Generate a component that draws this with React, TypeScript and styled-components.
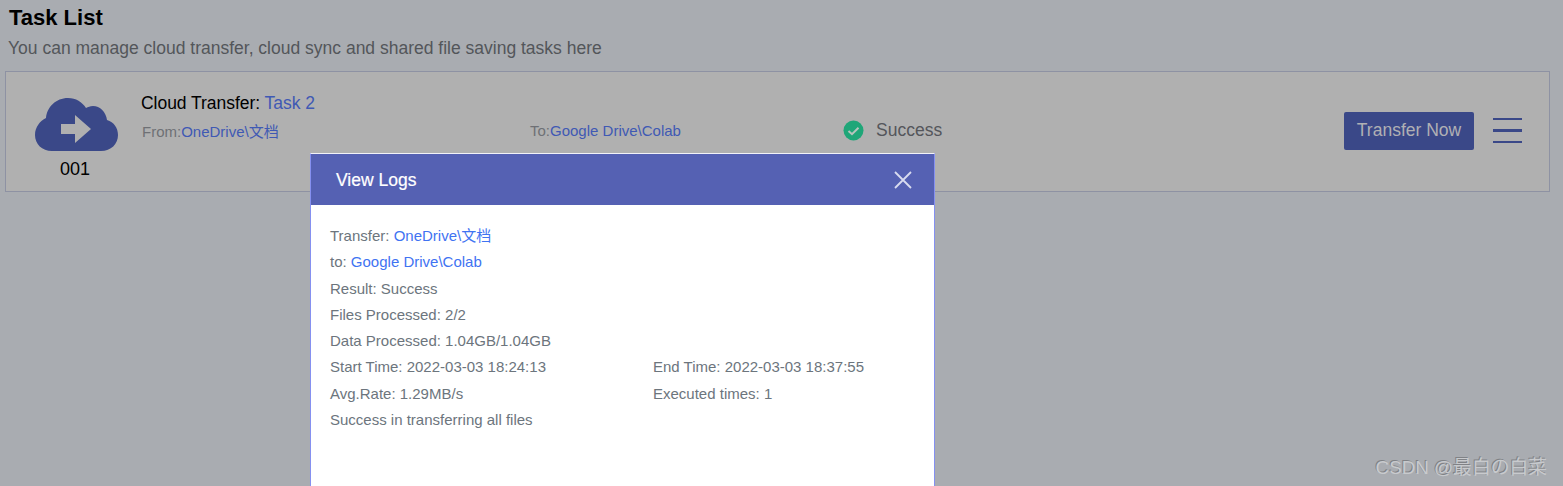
import React from 'react';
import styled, { createGlobalStyle } from 'styled-components';

const Global = createGlobalStyle`
  html, body {
    margin: 0;
    height: 100%;
    overflow: hidden;
    background: #a9acb1;
    font-family: "Liberation Sans", Arial, "Noto Sans CJK SC", sans-serif;
  }
  * { box-sizing: border-box; }
`;

const Page = styled.div`
  position: relative;
  width: 1563px;
  height: 486px;
  overflow: hidden;
  padding: 5px 13px 0 5px;
`;

const Title = styled.h1`
  margin: 0 0 0 4px;
  font-size: 22px;
  line-height: 26px;
  font-weight: 700;
  color: #000;
`;

const Subtitle = styled.p`
  margin: 5px 0 0 3px;
  font-size: 17.5px;
  line-height: 24px;
  color: #53565a;
`;

const TaskCard = styled.div`
  display: flex;
  align-items: stretch;
  height: 121px;
  margin-top: 11px;
  border: 1px solid #8e92a3;
  background: #b0b0b0;
`;

const IconColumn = styled.div`
  width: 136px;
  flex: none;
  display: flex;
  flex-direction: column;
  align-items: center;
  padding: 26px 0 0 2px;
  color: #000;
  font-size: 18px;
  line-height: 20px;
`;

const CloudWrap = styled.div`
  height: 54px;
  margin-left: 3px;
`;

const Count = styled.div`
  margin-top: 7px;
`;

const Info = styled.div`
  flex: 1;
  padding-top: 21px;
`;

const TaskName = styled.div`
  font-size: 17.5px;
  line-height: 21px;
  color: #000;
  margin-left: -1px;
  letter-spacing: -0.04px;
`;

const Accent = styled.span`
  color: #3f59b4;
`;

const PathRow = styled.div`
  display: flex;
  align-items: center;
  margin-top: 4px;
  height: 24px;
  font-size: 15px;
  color: #6e7075;
`;

const PathCell = styled.div<{ $width: number }>`
  width: ${p => p.$width}px;
  flex: none;
`;

const Status = styled.div`
  display: flex;
  align-items: center;
  gap: 12px;
  font-size: 17.5px;
  line-height: 22px;
  color: #54565b;
`;

const Actions = styled.div`
  display: flex;
  align-items: center;
  gap: 19px;
  padding: 0 27px 0 0;
  margin-top: -2px;
`;

const TransferButton = styled.button`
  width: 130px;
  height: 38px;
  border: 0;
  border-radius: 2px;
  background: #3a4888;
  color: #b0b0b4;
  font: 17.5px "Liberation Sans", Arial, sans-serif;
  padding: 0;
`;

const Burger = styled.div`
  width: 29px;
  display: flex;
  flex-direction: column;
  gap: 9px;
`;

const BurgerLine = styled.span`
  display: block;
  height: 2.5px;
  background: #3a4888;
`;

const Modal = styled.div`
  position: absolute;
  left: 310px;
  top: 153px;
  width: 625px;
  height: 340px;
  border: 1px solid #8590f0;
  border-top: 1px solid #f2f2f8;
  background: #fff;
`;

const ModalHeader = styled.div`
  display: flex;
  align-items: center;
  justify-content: space-between;
  height: 51px;
  padding: 1px 22px 0 25px;
  background: #5561b3;
  color: #fff;
  font-size: 17.5px;
  -webkit-text-stroke: 0.2px #fff;
`;

const CloseIcon = styled.svg`
  display: block;
  width: 18px;
  height: 18px;
  margin-top: -1px;
`;

const ModalBody = styled.div`
  padding: 18px 19px 0;
  font-size: 15px;
  line-height: 26.25px;
  color: #6c757d;
`;

const LogLine = styled.div``;

const LogColumns = styled.div`
  display: grid;
  grid-template-columns: 323px 1fr;
`;

const LogLink = styled.span`
  color: #3f73f2;
`;

const Watermark = styled.div`
  position: absolute;
  right: 16px;
  bottom: 8px;
  font-size: 18.8px;
  line-height: 20px;
  color: #c8cacd;
  text-shadow: -1px -1px 0 #808286;
`;

const CloudIcon = () => (
  <svg width="84" height="54" viewBox="0 0 84 54">
    <path
      fill="#3a4888"
      d="M17 53C7 53 0 46 0 37 0 29 5 23 11 20 12 9 21 0 33 0 41 0 47 4 51 10 53 9 55 8 58 8 65 8 71 14 72 22 79 24 83 30 83 37 83 46 76 53 66 53Z"
    />
    <path fill="#b0b0b0" d="M26 26H40V17L56 31 40 45V36H26Z" />
  </svg>
);

const SuccessIcon = () => (
  <svg width="21" height="21" viewBox="0 0 21 21">
    <circle cx="10.5" cy="10.5" r="10" fill="#1fa678" />
    <path d="M5.5 11l3.5 3.2 6.5-6.5" fill="none" stroke="#b7c4bd" strokeWidth="2" />
  </svg>
);

export default function App() {
  return (
    <Page>
      <Global />
      <Title>Task List</Title>
      <Subtitle>You can manage cloud transfer, cloud sync and shared file saving tasks here</Subtitle>
      <TaskCard>
        <IconColumn>
          <CloudWrap>
            <CloudIcon />
          </CloudWrap>
          <Count>001</Count>
        </IconColumn>
        <Info>
          <TaskName>
            Cloud Transfer: <Accent>Task 2</Accent>
          </TaskName>
          <PathRow>
            <PathCell $width={388}>
              From:<Accent>OneDrive\文档</Accent>
            </PathCell>
            <PathCell $width={313}>
              To:<Accent>Google Drive\Colab</Accent>
            </PathCell>
            <Status>
              <SuccessIcon />
              Success
            </Status>
          </PathRow>
        </Info>
        <Actions>
          <TransferButton>Transfer Now</TransferButton>
          <Burger>
            <BurgerLine />
            <BurgerLine />
            <BurgerLine />
          </Burger>
        </Actions>
      </TaskCard>
      <Modal>
        <ModalHeader>
          View Logs
          <CloseIcon viewBox="0 0 18 18">
            <path d="M1 1l16 16M17 1L1 17" stroke="#d9dcf0" strokeWidth="1.8" fill="none" />
          </CloseIcon>
        </ModalHeader>
        <ModalBody>
          <LogLine>
            Transfer: <LogLink>OneDrive\文档</LogLink>
          </LogLine>
          <LogLine>
            to: <LogLink>Google Drive\Colab</LogLink>
          </LogLine>
          <LogLine>Result: Success</LogLine>
          <LogLine>Files Processed: 2/2</LogLine>
          <LogLine>Data Processed: 1.04GB/1.04GB</LogLine>
          <LogColumns>
            <LogLine>Start Time: 2022-03-03 18:24:13</LogLine>
            <LogLine>End Time: 2022-03-03 18:37:55</LogLine>
            <LogLine>Avg.Rate: 1.29MB/s</LogLine>
            <LogLine>Executed times: 1</LogLine>
          </LogColumns>
          <LogLine>Success in transferring all files</LogLine>
        </ModalBody>
      </Modal>
      <Watermark>CSDN @最白の白菜</Watermark>
    </Page>
  );
}
